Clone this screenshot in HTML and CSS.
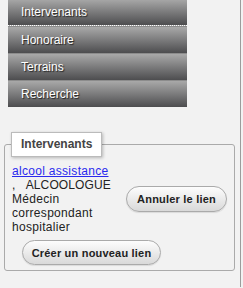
FILE: index.html
```html
<!DOCTYPE html>
<html lang="fr">
<head>
    <meta charset="UTF-8">
    <title>Intervenants</title>
    <link rel="stylesheet" href="styles.css">
</head>
<body>
    <div class="sidebar">
        <ul class="menu">
            <li class="menu-item current">Intervenants</li>
            <li class="menu-item">Honoraire</li>
            <li class="menu-item">Terrains</li>
            <li class="menu-item">Recherche</li>
        </ul>

        <fieldset class="panel">
            <legend class="panel-title">Intervenants</legend>
            <div class="link-row">
                <div class="link-info">
                    <a href="#">alcool assistance</a><br>
                    <span class="nowrap">,&nbsp;&nbsp;&nbsp;ALCOOLOGUE</span><br>
                    Médecin correspondant hospitalier
                </div>
                <button class="btn">Annuler le lien</button>
            </div>
            <button class="btn btn-new">Créer un nouveau lien</button>
        </fieldset>
    </div>
</body>
</html>
```

FILE: styles.css
```css
* {
    margin: 0;
    padding: 0;
    box-sizing: border-box;
}

body {
    font-family: 'Liberation Sans', Arial, sans-serif;
    background: #f2f2f2;
    color: #222;
    font-size: 12px;
}

.sidebar {
    width: 241px;
    height: 288px;
    border-right: 1px solid #9c9c9c;
}

.menu {
    list-style: none;
    margin: -1px 0 0 8px;
    width: 179px;
}

.menu-item {
    height: 27px;
    line-height: 26px;
    padding-left: 13px;
    color: #fff;
    font-size: 12px;
    text-shadow: 1px 1px 1px #222;
    background: linear-gradient(#a9a9a9, #4d4d4f);
    border-top: 1px solid #8c8c8c;
}

.menu-item.current {
    border-bottom: 1px dotted #fff;
    border-top: none;
}

.panel {
    margin: 25px 0 0 4px;
    width: 231px;
    border: 1px solid #aaa;
    border-radius: 3px;
    padding: 7px 7px 5px 7px;
}

.panel-title {
    margin-left: -1px;
    background: #fff;
    border: 1px solid #bbb;
    box-shadow: 1px 1px 3px rgba(0, 0, 0, 0.25);
    padding: 0 9px;
    height: 25px;
    line-height: 23px;
    font-weight: bold;
    color: #444;
    font-size: 12px;
}

.link-row {
    display: flex;
    align-items: center;
    justify-content: space-between;
}

.link-info {
    width: 104px;
    line-height: 14px;
    letter-spacing: 0.3px;
}

.link-info a {
    color: #2a2aee;
}

.nowrap {
    white-space: nowrap;
    letter-spacing: 0.1px;
}

.btn {
    font-family: 'Liberation Sans', Arial, sans-serif;
    font-weight: bold;
    font-size: 11px;
    letter-spacing: 0.2px;
    white-space: nowrap;
    color: #222;
    height: 26px;
    padding: 0 8px;
    border: 1px solid #aaa;
    border-radius: 13px;
    background: linear-gradient(#fdfdfd, #d9d9d9);
    box-shadow: 0 1px 1px rgba(0, 0, 0, 0.1);
}

.link-row .btn {
    width: 101px;
}

.btn-new {
    margin: 6px 0 0 10px;
    width: 139px;
    height: 25px;
}
```
